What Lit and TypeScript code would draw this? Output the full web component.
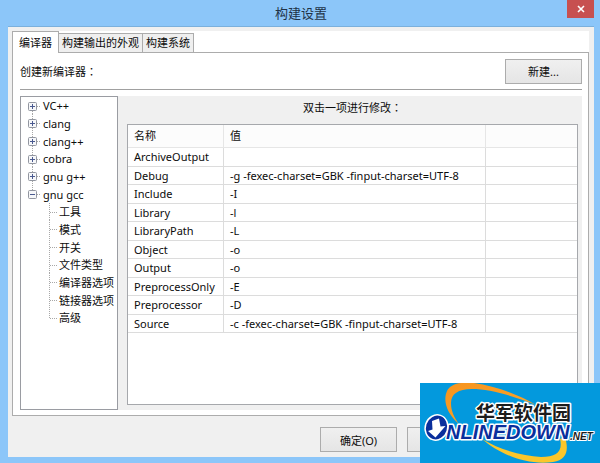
import { LitElement, html, svg, css, nothing } from "lit";
import { customElement, state } from "lit/decorators.js";

interface TreeRow {
  label: string;
  level: 1 | 2;
  open?: boolean;
}

const TREE: TreeRow[] = [
  { label: "VC++", level: 1 },
  { label: "clang", level: 1 },
  { label: "clang++", level: 1 },
  { label: "cobra", level: 1 },
  { label: "gnu g++", level: 1 },
  { label: "gnu gcc", level: 1, open: true },
  { label: "工具", level: 2 },
  { label: "模式", level: 2 },
  { label: "开关", level: 2 },
  { label: "文件类型", level: 2 },
  { label: "编译器选项", level: 2 },
  { label: "链接器选项", level: 2 },
  { label: "高级", level: 2 },
];

const ROWS: [string, string][] = [
  ["ArchiveOutput", ""],
  ["Debug", "-g -fexec-charset=GBK -finput-charset=UTF-8"],
  ["Include", "-I"],
  ["Library", "-l"],
  ["LibraryPath", "-L"],
  ["Object", "-o"],
  ["Output", "-o"],
  ["PreprocessOnly", "-E"],
  ["Preprocessor", "-D"],
  ["Source", "-c -fexec-charset=GBK -finput-charset=UTF-8"],
];

const TABS = ["编译器", "构建输出的外观", "构建系统"];

@customElement("compiler-tree")
class CompilerTree extends LitElement {
  static styles = css`
    :host { display: block; box-sizing: border-box; border: 1px solid #9a9ca2; background: #fff; }
    ul { list-style: none; margin: 0; padding: 0 0 0 7px; }
    li { display: flex; align-items: center; height: 18px; white-space: nowrap; }
    li:nth-child(3n + 1) { height: 17px; }
    .guide { flex: none; height: 18px; }
    .level1 .guide { width: 15px; }
    .level2 .guide { width: 31px; }
    .guide line { stroke: #a8a8a8; stroke-dasharray: 1 1; }
    .label { line-height: 17px; }
  `;

  private guide(row: TreeRow, i: number) {
    const last = i === TREE.length - 1;
    if (row.level === 2) {
      return html`<svg class="guide" viewBox="0 0 31 18" width="31" height="18" aria-hidden="true">
        <line x1="21.5" y1="0" x2="21.5" y2=${last ? 9 : 18}></line>
        <line x1="22" y1="9.5" x2="29" y2="9.5"></line>
      </svg>`;
    }
    return html`<svg class="guide" viewBox="0 0 15 18" width="15" height="18" aria-hidden="true">
      ${i > 0 ? svg`<line x1="4.5" y1="0" x2="4.5" y2="5"></line>` : nothing}
      ${row.open ? nothing : svg`<line x1="4.5" y1="14" x2="4.5" y2="18"></line>`}
      <line x1="9" y1="9.5" x2="13" y2="9.5"></line>
      <rect x="0.5" y="5.5" width="8" height="8" rx="1" fill="#f6f7f9" stroke="#9296a0"></rect>
      <path d=${row.open ? "M2 9.5h5" : "M2 9.5h5M4.5 7v5"} stroke="#4a5a90"></path>
    </svg>`;
  }

  render() {
    return html`<ul role="tree" aria-label="编译器">
      ${TREE.map(
        (row, i) => html`<li class="level${row.level}" role="treeitem" aria-level=${row.level}
          aria-expanded=${row.level === 1 ? String(!!row.open) : nothing}>${this.guide(row, i)}<span class="label">${row.label}</span></li>`
      )}
    </ul>`;
  }
}

@customElement("option-table")
class OptionTable extends LitElement {
  static styles = css`
    :host { display: block; box-sizing: border-box; border: 1px solid #a6a8ac; background: #fff; }
    table { width: 100%; border-collapse: separate; border-spacing: 0; table-layout: fixed; }
    .name { width: 96px; }
    .value { width: 262px; }
    th, td {
      box-sizing: border-box; height: 18px; padding: 0 0 0 6px; line-height: 16px;
      border-bottom: 1px solid #dcdcdc; border-right: 1px solid #dcdcdc;
      text-align: left; font-weight: 400; white-space: nowrap;
    }
    tr:nth-child(odd) td { height: 19px; }
    th { height: 23px; background: #fcfcfc; border-color: #e6e6e6; }
    th:last-child, td:last-child { border-right: 0; }
  `;

  render() {
    return html`<table>
      <colgroup><col class="name" /><col class="value" /><col /></colgroup>
      <thead><tr><th scope="col">名称</th><th scope="col">值</th><th></th></tr></thead>
      <tbody>
        ${ROWS.map(([name, value]) => html`<tr><td>${name}</td><td>${value}</td><td></td></tr>`)}
      </tbody>
    </table>`;
  }
}

@customElement("site-badge")
class SiteBadge extends LitElement {
  static styles = css`
    :host { display: block; width: 180px; height: 80px; background: #0399dd; }
    svg { display: block; }
    text { paint-order: stroke; stroke: #fff; stroke-linejoin: round; }
    .cn { font: 700 19px "Noto Sans CJK SC", sans-serif; fill: #1c1c1c; stroke-width: 3px; }
    .en { font: italic 700 20px "Liberation Sans", Arial, sans-serif; fill: #0a2f9c; stroke-width: 3px; }
    .net { font: italic 700 10px "Liberation Sans", Arial, sans-serif; fill: #1c1c1c; stroke-width: 2px; }
  `;

  render() {
    return html`<svg viewBox="0 0 180 80" width="180" height="80">
      <defs>
        <linearGradient id="ring" x1="0" y1="0" x2="1" y2="1">
          <stop offset="0" stop-color="#f7931e"></stop>
          <stop offset="1" stop-color="#fba92a"></stop>
        </linearGradient>
      </defs>
      <path fill="url(#ring)" d="M39 41C26 30 23 17 27 8C31 0 42-1 54 0C75 3 98 11 116 22C94 13 70 6 52 6C38 6 31 11 31 20C31 28 34 34 39 41Z"></path>
      <path fill="#fbc62a" d="M62 56C82 68 104 73 121 74C137 74 143 68 140 56L145 54C149 67 147 77 133 79C106 83 78 70 62 56Z"></path>
      <text class="cn" x="56" y="37">华军软件园</text>
      <text class="en" x="26" y="56">NLINEDOWN</text>
      <text class="net" x="150" y="57">.NET</text>
      <g transform="rotate(18 16.500 44.500)">
        <ellipse cx="16.500" cy="44.500" rx="12" ry="13.500" fill="#fff"></ellipse>
        <ellipse cx="16.500" cy="44.500" rx="10.500" ry="12" fill="#0a2f9c"></ellipse>
      </g>
      <path fill="#fff" d="M12 38L19 35.500L20.500 43.500L25.500 43L15.500 54.500L8 48L12.500 46.500Z"></path>
    </svg>`;
  }
}

@customElement("app-root")
class AppRoot extends LitElement {
  static styles = css`
    :host {
      display: flex; flex-direction: column; position: relative; box-sizing: border-box;
      min-height: 100vh; padding: 0 6px 6px 8px;
      background: #8cc6f9;
      color: #0c0c0c; font: 11px "Noto Sans", "Noto Sans CJK SC", sans-serif;
    }
    button { font: inherit; color: inherit; margin: 0; padding: 0; box-sizing: border-box; }
    .titlebar { display: grid; grid-template-columns: 1fr auto 1fr; height: 26px; }
    h1 { grid-column: 2; margin: 0; font-size: 13px; font-weight: 400; line-height: 26px; color: #1f3348; }
    .close { justify-self: end; width: 27px; height: 18px; border: 0; background: #c75050; display: grid; place-items: center; }
    .client {
      flex: 1; display: flex; flex-direction: column; background: #f0f0f0;
      border-top: 1px solid #7bb0dc; padding: 4px 5px 5px 4px;
    }
    .tabs { display: flex; align-items: flex-end; height: 22px; background: #fff; box-shadow: inset 0 -1px #acacac; }
    .tab { height: 20px; border: 1px solid #acacac; border-left-width: 0; background: #efefef; line-height: 18px; padding: 0 3px; white-space: nowrap; }
    .tab.active { height: 22px; background: #fff; border-left-width: 1px; border-bottom: 0; padding: 0 6px; }
    .panel {
      flex: 1; display: flex; flex-direction: column; background: #fff;
      border: 1px solid #acacac; border-top: 0; padding: 0 6px 5px 7px;
    }
    .create { display: flex; justify-content: space-between; align-items: center; height: 36px; border-bottom: 1px solid #a0a0a0; }
    .colon { font-family: "Noto Sans CJK TC", sans-serif; }
    .push { width: 77px; height: 25px; border: 1px solid #acacac; background: linear-gradient(#f0f0f0, #e5e5e5); }
    .split { flex: 1; display: flex; margin-top: 6px; }
    compiler-tree { width: 98px; }
    .detail { flex: 1; display: flex; flex-direction: column; background: #f0f0f0; padding: 0 4px 5px 9px; }
    .hint { margin: 0; height: 28px; line-height: 23px; text-align: center; }
    option-table { flex: 1; }
    .actions { display: flex; justify-content: flex-end; gap: 10px; padding: 11px 105px 0 0; }
    site-badge { position: absolute; right: 0; bottom: 0; }
  `;

  @state() private active = 0;

  render() {
    return html`
      <header class="titlebar">
        <h1>构建设置</h1>
        <button class="close" aria-label="关闭">
          <svg width="8" height="8" viewBox="0 0 8 8"><path d="M1 1l6 6M7 1l-6 6" stroke="#fff" stroke-width="1.600"></path></svg>
        </button>
      </header>
      <main class="client">
        <div class="tabs" role="tablist">
          ${TABS.map(
            (t, i) => html`<button class="tab ${i === this.active ? "active" : ""}" role="tab"
              aria-selected=${String(i === this.active)} @click=${() => (this.active = i)}>${t}</button>`
          )}
        </div>
        <section class="panel">
          <div class="create"><span>创建新编译器<span class="colon" lang="zh-TW">：</span></span><button class="push">新建...</button></div>
          <div class="split">
            <compiler-tree></compiler-tree>
            <div class="detail">
              <p class="hint">双击一项进行修改<span class="colon" lang="zh-TW">：</span></p>
              <option-table></option-table>
            </div>
          </div>
        </section>
        <footer class="actions">
          <button class="push">确定(O)</button>
          <button class="push">取消(C)</button>
        </footer>
      </main>
      <site-badge></site-badge>
    `;
  }
}
